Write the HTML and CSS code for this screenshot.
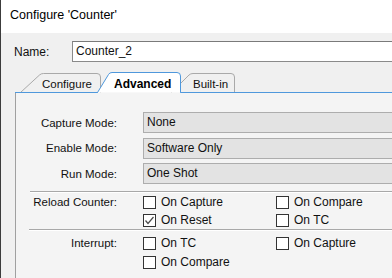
FILE: index.html
```html
<!DOCTYPE html>
<html lang="en">
<head>
    <meta charset="UTF-8">
    <title>Configure 'Counter'</title>
    <link rel="stylesheet" href="styles.css">
</head>
<body>
<div class="window">
    <div class="titlebar">Configure 'Counter'</div>
    <div class="client">
        <div class="name-row">
            <span class="name-label">Name:</span>
            <div class="textbox">Counter_2</div>
        </div>
        <svg class="tabstrip" width="391" height="21" viewBox="0 0 391 21">
            <!-- inactive tabs first, selected tab on top -->
            <path class="tab" d="M19.5,20.5 L38.5,3 Q40,1.5 42.5,1.5 L96,1.5 Q99.5,1.5 99.5,5 L99.5,20.5"/>
            <path class="tab" d="M170.5,20.5 L188,3 Q189.5,1.5 192,1.5 L230,1.5 Q233.5,1.5 233.5,5 L233.5,20.5"/>
            <path class="tab-line" d="M14,20.5 H97 M179,20.5 H391"/>
            <path class="tab tab-active" d="M96.5,20.5 L107.5,2.5 Q108.5,0.5 111,0.5 L176,0.5 Q179.5,0.5 179.5,4 L179.5,20.5"/>
            <text class="tab-text" x="41" y="16">Configure</text>
            <text class="tab-text tab-text-active" x="113" y="16">Advanced</text>
            <text class="tab-text" x="192" y="16">Built-in</text>
        </svg>
        <div class="panel">
            <div class="fields">
                <span class="label">Capture Mode:</span>
                <div class="combo">None</div>
                <span class="label">Enable Mode:</span>
                <div class="combo">Software Only</div>
                <span class="label">Run Mode:</span>
                <div class="combo">One Shot</div>
            </div>
            <div class="sep"></div>
            <div class="group reload">
                <span class="label">Reload Counter:</span>
                <div class="options">
                    <div class="check"><span class="box"></span>On Capture</div>
                    <div class="check"><span class="box"></span>On Compare</div>
                    <div class="check">
                        <span class="box"><svg width="11" height="11" viewBox="0 0 11 11"><path d="M1.5,5.5 L4,8.5 L9.5,2" fill="none" stroke="#4a4a4a" stroke-width="1.2"/></svg></span>On Reset
                    </div>
                    <div class="check"><span class="box"></span>On TC</div>
                </div>
            </div>
            <div class="sep sep-low"></div>
            <div class="group interrupt">
                <span class="label">Interrupt:</span>
                <div class="options">
                    <div class="check"><span class="box"></span>On TC</div>
                    <div class="check"><span class="box"></span>On Capture</div>
                    <div class="check"><span class="box"></span>On Compare</div>
                </div>
            </div>
        </div>
    </div>
</div>
</body>
</html>
```

FILE: styles.css
```css
body {
    margin: 0;
    overflow: hidden;
    background: #f0f0f0;
    width: 392px;
    height: 278px;
    font-family: "Liberation Sans", Arial, sans-serif;
    font-size: 12px;
    color: #111;
}

.window {
    box-sizing: border-box;
    width: 392px;
    height: 278px;
    overflow: hidden;
    border-left: 1px solid #3c3c3c;
    background: #f0f0f0;
}

.titlebar {
    box-sizing: border-box;
    height: 33px;
    padding: 7px 0 0 9px;
    line-height: 16px;
    font-size: 12.5px;
    background: #fff;
    color: #000;
}

.name-row {
    display: flex;
    align-items: center;
    margin-top: 8px;
    padding-left: 13px;
}

.name-label {
    width: 58px;
}

.textbox {
    box-sizing: border-box;
    flex: 1;
    height: 21px;
    margin-right: -4px;
    padding: 0 3px;
    line-height: 19px;
    background: #fff;
    border: 1px solid #8a8a8a;
    border-top-color: #7a7a7a;
}

.tabstrip {
    display: block;
    margin-top: 10px;
}

.tab {
    fill: #f0f0f0;
    stroke: #a9a9a9;
    stroke-width: 1;
}

.tab-active {
    fill: #fff;
    stroke: #4f98dc;
}

.tab-line {
    fill: none;
    stroke: #4f98dc;
    stroke-width: 1;
}

.tab-text {
    font-family: "Liberation Sans", Arial, sans-serif;
    font-size: 11.5px;
    fill: #111;
}

.tab-text-active {
    font-size: 12px;
    font-weight: bold;
    fill: #000;
}

.panel {
    box-sizing: border-box;
    height: 185px;
    margin-left: 14px;
    padding: 19px 0 0 14px;
    border-left: 1px solid #a0a0a0;
    background: #f4f4f4;
}

.fields {
    display: grid;
    grid-template-columns: 87px 1fr;
    grid-auto-rows: 21px;
    column-gap: 26px;
    row-gap: 4.5px;
}

.label {
    text-align: right;
    align-self: center;
    white-space: nowrap;
    font-size: 11.5px;
}

.combo {
    box-sizing: border-box;
    height: 21px;
    margin-right: -4px;
    padding: 0 3px;
    line-height: 19px;
    background: #e3e3e3;
    border: 1px solid #adadad;
}

.sep {
    height: 0;
    margin-top: 7px;
    border-top: 1px solid #a8a8a8;
    border-bottom: 1px solid #fff;
}

.sep-low {
    margin-top: 2px;
    margin-left: -1px;
}

.group {
    display: grid;
    grid-template-columns: 87px 1fr;
    column-gap: 26px;
    margin-top: 3px;
}

.interrupt {
    margin-top: 6px;
}

.group .label {
    align-self: start;
    line-height: 13px;
}

.options {
    display: grid;
    grid-template-columns: 133px auto;
    row-gap: 5px;
}

.interrupt .options {
    row-gap: 6px;
}

.check {
    display: flex;
    align-items: center;
    gap: 5px;
    height: 13px;
    line-height: 13px;
}

.box {
    box-sizing: border-box;
    display: flex;
    align-items: center;
    justify-content: center;
    width: 13px;
    height: 13px;
    border: 1px solid #333;
    background: #fff;
}
```
